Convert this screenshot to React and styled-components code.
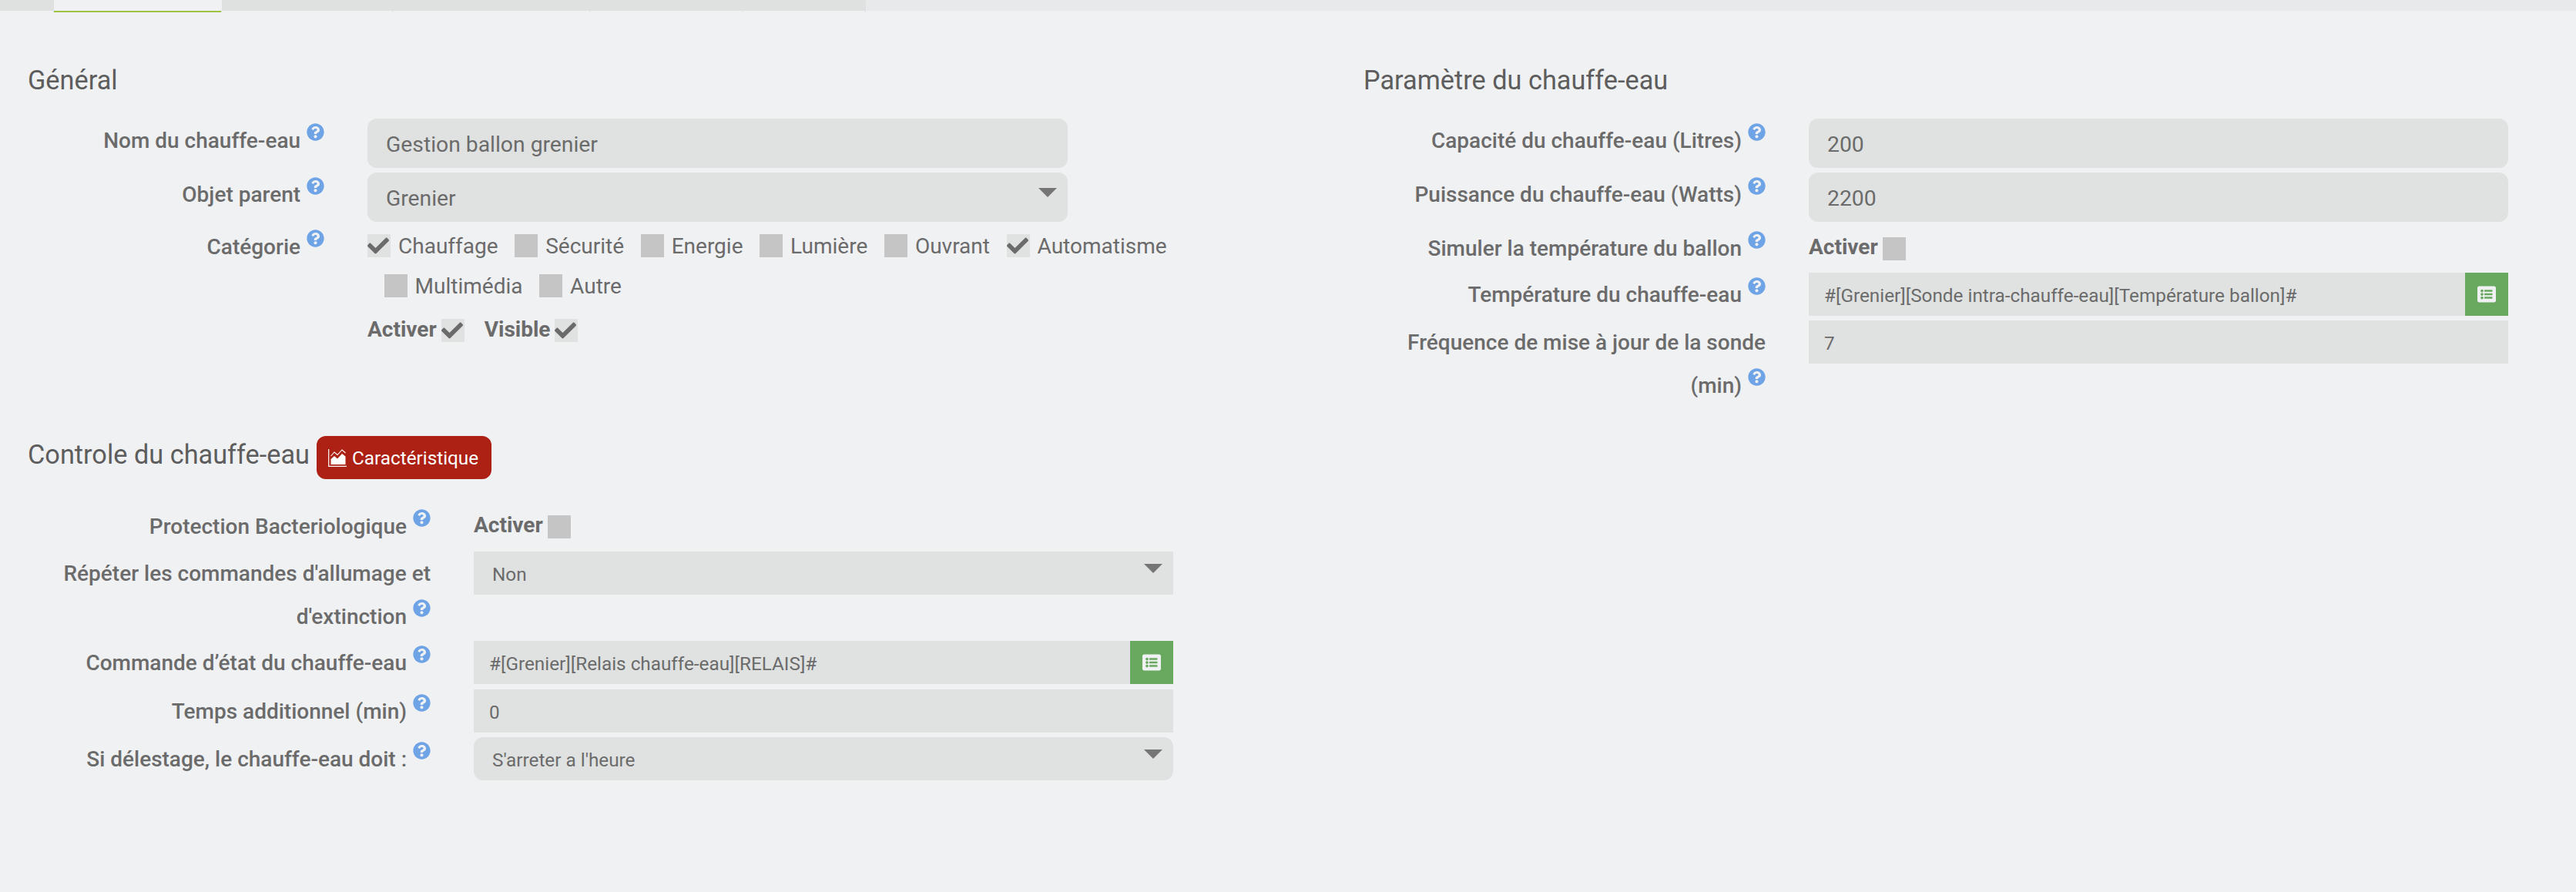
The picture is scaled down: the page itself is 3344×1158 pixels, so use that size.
import React from "react";
import styled, { createGlobalStyle } from "styled-components";
import { FaCheck, FaListAlt, FaQuestionCircle } from "react-icons/fa";

const GlobalStyle = createGlobalStyle`
  html, body {
    margin: 0;
    background: #f0f1f3;
  }
  body {
    font-family: Roboto, "Liberation Sans", sans-serif;
    color: #6b6b6b;
  }
`;

const TABS = [70, 218, 222, 256, 199, 159];
const CATEGORIES = [
  { name: "Chauffage", on: true },
  { name: "Sécurité" },
  { name: "Energie" },
  { name: "Lumière" },
  { name: "Ouvrant" },
  { name: "Automatisme", on: true },
  { name: "Multimédia" },
  { name: "Autre" },
];

function Help() {
  return <HelpIcon><FaQuestionCircle /></HelpIcon>;
}

function Box({ on }) {
  return <CheckBox $on={on}>{on && <FaCheck />}</CheckBox>;
}

function AreaIcon() {
  return (
    <ChartSvg viewBox="0 0 24 23">
      <path d="M0.7 0v22.3H24" fill="none" stroke="#fff" strokeWidth="1.2" />
      <path d="M3.5 20V13l4.5-4 4 3.5 6-6.5 4.5 3.5V20z" fill="#fff" />
      <path d="M3.5 9l4.5-5 4 3.5 6-6.5 4.5 4" fill="none" stroke="#fff" strokeWidth="1.1" />
    </ChartSvg>
  );
}

function CmdField({ children }) {
  return (
    <InputGroup>
      <Field $size={24.3} $pad={20}>{children}</Field>
      <AddOn><FaListAlt /></AddOn>
    </InputGroup>
  );
}

export default function App() {
  return (
    <>
      <GlobalStyle />
      <TabBar>
        {TABS.map((w, i) => (
          <Tab key={i} $width={w} $active={i === 1} />
        ))}
        <TabRest />
      </TabBar>
      <Columns>
        <div>
          <Heading>Général</Heading>
          <Row $label={385} $control={909} $mt={0}>
            <Label>Nom du chauffe-eau <Help /></Label>
            <Field $round $h={64}>Gestion ballon grenier</Field>
          </Row>
          <Row $label={385} $control={909}>
            <Label>Objet parent <Help /></Label>
            <Field $round $h={64}>Grenier<Arrow $top={20} /></Field>
          </Row>
          <Row $label={385} $control={909} $mt={4}>
            <Label>Catégorie <Help /></Label>
            <CheckWrap>
              {CATEGORIES.map((c) => (
                <CheckItem key={c.name}>
                  <Box on={c.on} />
                  <span>{c.name}</span>
                </CheckItem>
              ))}
            </CheckWrap>
          </Row>
          <Row $label={385} $control={909}>
            <span />
            <InlineOptions>
              <strong>Activer</strong><Box on />
              <strong>Visible</strong><Box on />
            </InlineOptions>
          </Row>

          <SectionHead>
            <Heading as="h4" $flat>Controle du chauffe-eau</Heading>
            <RedButton><AreaIcon /> Caractéristique</RedButton>
          </SectionHead>
          <Row $label={523} $control={908} $mt={0}>
            <Label>Protection Bacteriologique <Help /></Label>
            <InlineOptions><strong>Activer</strong><Box /></InlineOptions>
          </Row>
          <Row $label={523} $control={908} $mt={4}>
            <Label>Répéter les commandes d'allumage et d'extinction <Help /></Label>
            <Field $size={24.3}>Non<Arrow $top={16} /></Field>
          </Row>
          <Row $label={523} $control={908} $mt={3}>
            <Label>Commande d’état du chauffe-eau <Help /></Label>
            <CmdField>#[Grenier][Relais chauffe-eau][RELAIS]#</CmdField>
          </Row>
          <Row $label={523} $control={908}>
            <Label>Temps additionnel (min) <Help /></Label>
            <Field $size={24.3} $pad={20}>0</Field>
          </Row>
          <Row $label={523} $control={908} $mt={5}>
            <Label>Si délestage, le chauffe-eau doit : <Help /></Label>
            <Field $size={24.3} $round>S'arreter a l'heure<Arrow $top={16} /></Field>
          </Row>
        </div>

        <div>
          <Heading>Paramètre du chauffe-eau</Heading>
          <Row $label={522} $control={908} $mt={0}>
            <Label>Capacité du chauffe-eau (Litres) <Help /></Label>
            <Field $round $h={64}>200</Field>
          </Row>
          <Row $label={522} $control={908}>
            <Label>Puissance du chauffe-eau (Watts) <Help /></Label>
            <Field $round $h={64}>2200</Field>
          </Row>
          <Row $label={522} $control={908}>
            <Label>Simuler la température du ballon <Help /></Label>
            <InlineOptions><strong>Activer</strong><Box /></InlineOptions>
          </Row>
          <Row $label={522} $control={908} $mt={3}>
            <Label>Température du chauffe-eau <Help /></Label>
            <CmdField>#[Grenier][Sonde intra-chauffe-eau][Température ballon]#</CmdField>
          </Row>
          <Row $label={522} $control={908} $mt={5}>
            <Label>Fréquence de mise à jour de la sonde (min) <Help /></Label>
            <Field $size={24.3} $pad={20}>7</Field>
          </Row>
        </div>
      </Columns>
    </>
  );
}

const TabBar = styled.div`
  display: flex;
  height: 16px;
`;

const Tab = styled.div`
  position: relative;
  width: ${(p) => p.$width}px;
  height: ${(p) => (p.$active ? 16 : 14)}px;
  box-sizing: border-box;
  background: ${(p) => (p.$active ? "#f0f1f3" : "#dfe1e0")};
  border-bottom: ${(p) => (p.$active ? "2px solid #9dc23f" : "none")};
  &::after {
    content: "";
    position: absolute;
    right: 0;
    top: 14px;
    width: 1px;
    height: 2px;
    background: #dfe1e0;
  }
`;

const TabRest = styled.div`
  flex: 1;
  height: 14px;
  background: #e8e9ea;
`;

const Columns = styled.div`
  display: grid;
  grid-template-columns: 1734px 1fr;
  padding: 64px 88px 0 36px;
`;

const Heading = styled.h4`
  margin: 0 0 ${(p) => (p.$flat ? 0 : 26)}px;
  font-size: 34.3px;
  font-weight: 400;
  line-height: 48px;
  color: #5d5d5d;
`;

const SectionHead = styled.div`
  display: flex;
  align-items: flex-start;
  gap: 9px;
  margin: 111px 0 33px;
`;

const RedButton = styled.button`
  display: inline-flex;
  align-items: center;
  gap: 7px;
  height: 56px;
  padding: 0 17px 0 15px;
  border: none;
  border-radius: 12px;
  background: #ad2114;
  color: #fff;
  font-family: inherit;
  font-size: 24.3px;
`;

const ChartSvg = styled.svg`
  width: 24px;
  height: 23px;
`;

const Row = styled.div`
  display: grid;
  grid-template-columns: ${(p) => p.$label}px ${(p) => p.$control}px;
  column-gap: 56px;
  margin-top: ${(p) => p.$mt ?? 6}px;
`;

const Label = styled.label`
  padding-top: 1px;
  font-size: 28px;
  font-weight: 500;
  line-height: 56px;
  text-align: right;
`;

const HelpIcon = styled.span`
  display: inline-block;
  margin-left: 1px;
  line-height: 0;
  font-size: 23px;
  color: #6ea3e6;
  vertical-align: 9px;
`;

const Field = styled.div`
  position: relative;
  display: flex;
  flex: 1;
  align-items: center;
  box-sizing: border-box;
  height: ${(p) => p.$h || 56}px;
  padding: 3px 0 0 ${(p) => p.$pad || 24}px;
  border-radius: ${(p) => (p.$round ? 12 : 0)}px;
  background: #e0e2e1;
  font-size: ${(p) => p.$size || 28.3}px;
  white-space: nowrap;
`;

const Arrow = styled.span`
  position: absolute;
  top: ${(p) => p.$top}px;
  right: 14px;
  border-style: solid;
  border-width: 12px 12px 0;
  border-color: #757575 transparent transparent;
`;

const InputGroup = styled.div`
  display: flex;
`;

const AddOn = styled.div`
  display: flex;
  flex: none;
  align-items: center;
  justify-content: center;
  width: 56px;
  height: 56px;
  background: #68a85f;
  color: #f0f1f3;
  font-size: 24px;
`;

const CheckWrap = styled.div`
  display: flex;
  flex-wrap: wrap;
  width: 1060px;
  margin-top: 1px;
`;

const CheckItem = styled.label`
  display: flex;
  align-items: center;
  gap: 10px;
  height: 52px;
  margin-left: 21.6px;
  font-size: 28px;
  &:first-child {
    margin-left: 0;
  }
`;

const CheckBox = styled.span`
  display: flex;
  flex: none;
  align-items: center;
  width: 30px;
  height: 30px;
  background: ${(p) => (p.$on ? "#e0e2e1" : "#c5c5c5")};
  color: #6b6b6b;
  font-size: 28px;
`;

const InlineOptions = styled.div`
  display: flex;
  align-items: center;
  height: 52px;
  font-size: 28px;
  strong {
    margin: 0 6px 4px 0;
    font-weight: 700;
  }
  strong:nth-of-type(2) {
    margin-left: 26px;
  }
  ${Label} + & {
    height: 57px;
  }
`;
